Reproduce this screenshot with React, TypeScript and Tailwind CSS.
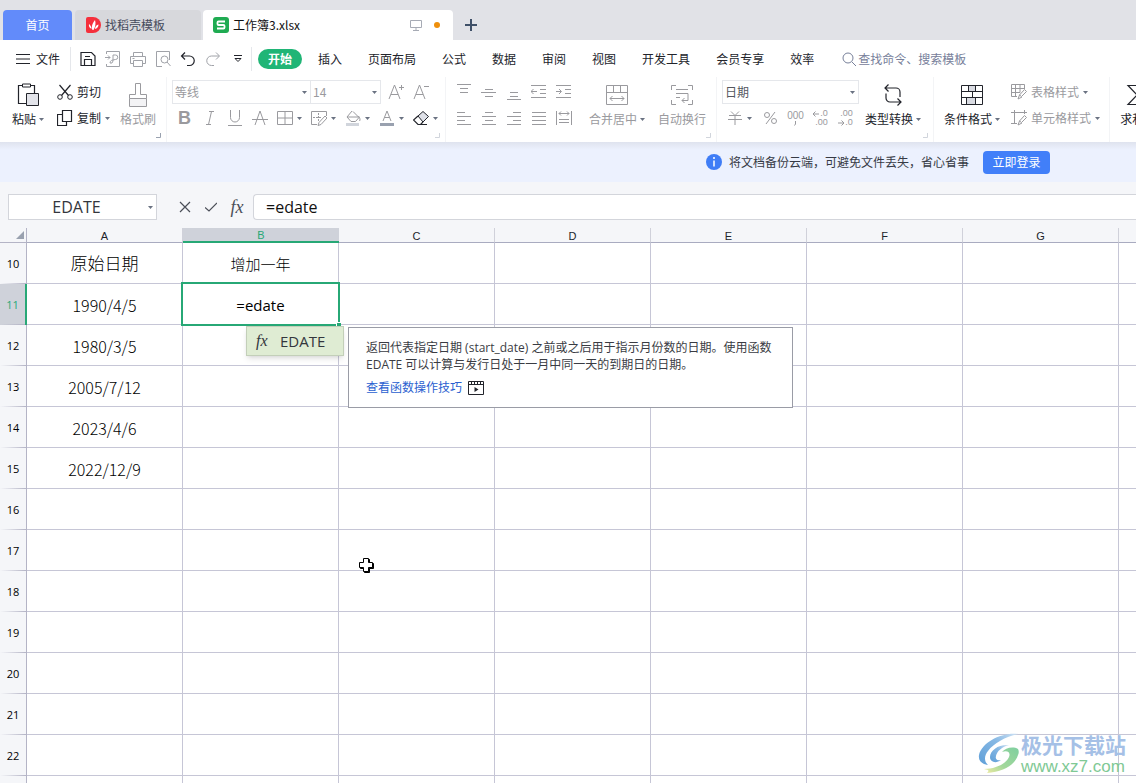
import type { ReactNode } from 'react';
import clsx from 'clsx';

type IconProps = { w?: number; h?: number; className?: string; children: ReactNode };

function Icon({ w = 16, h = 16, className, children }: IconProps) {
  return (
    <svg
      width={w}
      height={h}
      viewBox={`0 0 ${w} ${h}`}
      fill="none"
      stroke="currentColor"
      aria-hidden="true"
      className={clsx('shrink-0', className)}
    >
      {children}
    </svg>
  );
}

function Caret({ className = 'text-gray-500' }: { className?: string }) {
  return (
    <Icon w={5} h={3} className={className}>
      <path d="M0 0h5L2.5 3z" fill="currentColor" stroke="none" />
    </Icon>
  );
}

function Corner({ className = 'text-gray-400' }: { className?: string }) {
  return (
    <Icon w={5} h={5} className={clsx('absolute right-[5px] bottom-1', className)}>
      <path d="M4.5 0v4.5H0" />
    </Icon>
  );
}

function Group({ className, children }: { className?: string; children: ReactNode }) {
  return (
    <div className={clsx('relative flex h-[65px] shrink-0 items-start border-r border-gray-100 pt-[2px]', className)}>
      {children}
    </div>
  );
}

type BigButtonProps = { icon: ReactNode; label: string; caret?: boolean; muted?: boolean };

function BigButton({ icon, label, caret, muted }: BigButtonProps) {
  return (
    <button className={clsx('mt-[3px] flex shrink-0 flex-col items-center whitespace-nowrap', muted ? 'text-[#9a9a9e]' : 'text-[#22242b]')}>
      <span className="flex h-[26px] items-center">{icon}</span>
      <span className="flex h-[22px] items-center gap-[3px]">
        {label}
        {caret && <Caret />}
      </span>
    </button>
  );
}

function SmallButton({ icon, label, caret, muted }: BigButtonProps) {
  return (
    <button className={clsx('flex h-[26px] items-center gap-1 whitespace-nowrap', muted ? 'text-[#9a9a9e]' : 'text-[#22242b]')}>
      {icon}
      {label}
      {caret && <Caret />}
    </button>
  );
}

function Tool({ label, children }: { label: string; children: ReactNode }) {
  return (
    <button aria-label={label} className="flex h-[26px] w-[25px] items-center justify-center">
      {children}
    </button>
  );
}

function MenuTool({ label, children }: { label: string; children: ReactNode }) {
  return (
    <button aria-label={label} className="flex h-[26px] w-[34px] items-center justify-center gap-1">
      {children}
      <Caret />
    </button>
  );
}

type PickerProps = { label: string; value: string; className: string };

function Picker({ label, value, className }: PickerProps) {
  return (
    <label className={clsx('relative flex h-6 items-center border border-gray-200 bg-white', className)}>
      <select aria-label={label} className="h-full w-full appearance-none bg-transparent pl-[2px] outline-none">
        <option>{value}</option>
      </select>
      <Caret className="absolute right-[3px] text-gray-500" />
    </label>
  );
}

const menus = ['插入', '页面布局', '公式', '数据', '审阅', '视图', '开发工具', '会员专享', '效率'];

// each entry lists the strokes of a 16px alignment glyph
const verticalAligns = [
  { label: '顶端对齐', d: 'M1 .5h14M4 4.5h8M4 8.5h8' },
  { label: '垂直居中', d: 'M4 5.5h8M0 8.5h15M4 12.5h8' },
  { label: '底端对齐', d: 'M4 8.5h8M4 12.5h8M1 15.5h14' },
  { label: '减少缩进', d: 'M0 1.5h15M9 5.5h6M9 9.5h6M0 13.5h15M0 7.5h6M2.5 5L0 7.5 2.5 10' },
  { label: '增加缩进', d: 'M0 1.5h15M9 5.5h6M9 9.5h6M0 13.5h15M0 7.5h5M3 5l2.5 2.5L3 10' },
];

const horizontalAligns = [
  { label: '左对齐', d: 'M1 2.5h8M1 6.5h14M1 10.5h8M1 14.5h14' },
  { label: '水平居中', d: 'M4 2.5h8M1 6.5h14M4 10.5h8M1 14.5h14' },
  { label: '右对齐', d: 'M7 2.5h8M1 6.5h14M7 10.5h8M1 14.5h14' },
  { label: '两端对齐', d: 'M1 2.5h14M1 6.5h14M1 10.5h14M1 14.5h14' },
  { label: '分散对齐', d: 'M.5 1v14M15.5 1v14M3 3.5h10M5 1.5l-2 2 2 2M11 1.5l2 2-2 2M3 9.5h10M3 12.5h10' },
];

const columns = ['A', 'B', 'C', 'D', 'E', 'F', 'G', 'H'];
const rows = [10, 11, 12, 13, 14, 15, 16, 17, 18, 19, 20, 21, 22, 23];

const cells: Record<string, string> = {
  A10: '原始日期',
  B10: '增加一年',
  A11: '1990/4/5',
  A12: '1980/3/5',
  A13: '2005/7/12',
  A14: '2023/4/6',
  A15: '2022/12/9',
};

function TabBar() {
  return (
    <div className="flex h-10 shrink-0 items-end bg-[#e1e2e7] pl-[3px]">
      <button className="h-[30px] w-[69px] rounded-t bg-[#628bfa] text-white">首页</button>
      <button className="ml-[3px] flex h-[30px] w-[126px] items-center gap-1 rounded-t bg-[#d7d8dc] pl-[11px] text-[#464b5c]">
        <Icon w={15} h={16}>
          <path d="M0 2a2 2 0 0 1 2-2h5a8 8 0 0 1 0 16H2a2 2 0 0 1-2-2z" fill="#f5303c" stroke="none" />
          <path d="M6.500 13C5 10 6.500 6 9 3c1 3 .5 7-1.500 10zM5.500 12C3.500 11 2.500 9 3 7c1.500 1 2.500 3 2.500 5zM9 12c0-2.500 1.500-4 3.500-4.500 0 2.500-1.500 4-3.500 4.500z" fill="#fff" stroke="none" />
        </Icon>
        找稻壳模板
      </button>
      <div className="ml-[2px] flex h-[30px] w-[250px] items-center rounded-t bg-white pr-[13px] pl-[10px] text-[#111]">
        <Icon className="mr-1">
          <rect width="16" height="16" rx="3" fill="#1fab52" stroke="none" />
          <path d="M12 4.500H5.500a1 1 0 0 0-1 1V7a1 1 0 0 0 1 1h5a1 1 0 0 1 1 1v1.500a1 1 0 0 1-1 1H4" stroke="#fff" strokeWidth="1.800" />
        </Icon>
        工作簿3.xlsx
        <Icon w={12} h={12} className="ml-auto text-[#a7abb5]">
          <path d="M.5 1.500h11v7H.5zM6 8.500v3M3 11.500h6" />
        </Icon>
        <span className="ml-3 size-[6px] rounded-full bg-[#ee8f0c]" />
      </div>
      <button aria-label="新建" className="mb-2 ml-3 text-[#3f5068]">
        <Icon w={12} h={14}>
          <path d="M6 1v12M0 7h12" strokeWidth="2" />
        </Icon>
      </button>
    </div>
  );
}

function MenuBar() {
  return (
    <div className="flex h-[37px] shrink-0 items-center bg-white pl-4 whitespace-nowrap text-[#22242b]">
      <button className="flex items-center gap-[6px]">
        <Icon w={14} h={10}>
          <path d="M0 .5h14M0 5h14M0 9.500h14" />
        </Icon>
        文件
      </button>
      <div className="ml-[10px] h-6 w-px bg-gray-200" />
      <div className="ml-[9px] flex items-center gap-[9px] text-[#a0a2a8]">
        <button aria-label="保存" className="text-[#22242b]">
          <Icon>
            <path d="M1 14.500V1.500h10.500l3.500 3.500v9.500zM4.500 14.500v-6h7v6M5 5.500h5" strokeWidth="1.200" />
          </Icon>
        </button>
        <button aria-label="输出为PDF">
          <Icon>
            <path d="M1.500 3V.5h13v15h-13V13M0 6.500h5M3 4.500l2 2-2 2M8 10V4h2.500a2 2 0 0 1 0 4.500C7 9 5 9.500 5 12h2l1-2" />
          </Icon>
        </button>
        <button aria-label="打印">
          <Icon>
            <path d="M3.500 5V1.500h9V5M3.500 12.500h-3V5.500h15v7h-3M3.500 9.500h9v6h-9zM2.500 7.500h2" />
          </Icon>
        </button>
        <button aria-label="打印预览">
          <Icon>
            <path d="M7 15.500H1.500V.5h13V9" />
            <circle cx="9.500" cy="8.500" r="3.500" />
            <path d="M12 11l3.500 4" />
          </Icon>
        </button>
        <button aria-label="撤销" className="text-[#22242b]">
          <Icon>
            <path d="M5 1.500L1.500 5 5 8.500M2 5h7.500a4.500 4.500 0 0 1 0 9.500H7" strokeWidth="1.200" />
          </Icon>
        </button>
        <button aria-label="恢复">
          <Icon>
            <path d="M11 1.500L14.500 5 11 8.500M14 5H6.500a4.500 4.500 0 0 0 0 9.500H9" />
          </Icon>
        </button>
        <button aria-label="更多" className="ml-1 text-[#22242b]">
          <Icon w={8} h={8}>
            <path d="M0 .5h8M1 3.500h6L4 6.500z" />
          </Icon>
        </button>
      </div>
      <div className="ml-[9px] h-6 w-px bg-gray-200" />
      <button className="ml-[6px] h-5 w-11 rounded-full bg-[#20b576] font-bold text-white">开始</button>
      <nav className="ml-4 flex gap-[26px]">
        {menus.map((menu) => (
          <button key={menu}>{menu}</button>
        ))}
      </nav>
      <label className="ml-7 flex items-center gap-[2px] text-[#77809a]">
        <Icon w={14} h={14}>
          <circle cx="6" cy="6" r="5" />
          <path d="M10 10l4 4" />
        </Icon>
        <input
          aria-label="搜索"
          placeholder="查找命令、搜索模板"
          className="w-32 bg-transparent outline-none placeholder:text-[#77809a]"
        />
      </label>
    </div>
  );
}

function Ribbon() {
  return (
    <div className="relative z-10 flex h-[65px] shrink-0 overflow-hidden bg-white text-[#9a9a9e]">
      <Group className="pr-[10px] pl-3">
        <BigButton
          label="粘贴"
          caret
          icon={
            <Icon w={22} h={24}>
              <path d="M5 2.500H1.500v18H9M14 2.500h3.500V10" strokeWidth="1.200" />
              <path d="M5.500 1h8v3h-8z" />
              <path d="M9.500 10.500h12v12h-12z" fill="#e3e4ea" />
            </Icon>
          }
        />
        <div className="ml-[13px]">
          <SmallButton
            label="剪切"
            icon={
              <Icon>
                <path d="M2.500 1l9 10.500M13.500 1l-9 10.500" strokeWidth="1.200" />
                <circle cx="3" cy="13" r="2.300" />
                <circle cx="13" cy="13" r="2.300" />
              </Icon>
            }
          />
          <SmallButton
            label="复制"
            caret
            icon={
              <Icon>
                <path d="M5.500 .5h9v11h-9zM5.500 4.500h-5v11h9v-4" strokeWidth="1.200" />
              </Icon>
            }
          />
        </div>
        <div className="ml-[10px]">
          <BigButton
            label="格式刷"
            muted
            icon={
              <Icon w={20} h={24}>
                <path d="M1.500 15.500h17v8h-17z" fill="#f3f3f5" />
                <path d="M1.500 15.500v-4h6v-11h5v11h6v4" />
              </Icon>
            }
          />
        </div>
        <Corner />
      </Group>

      <Group className="pr-[3px] pl-[5px]">
        <div>
          <div className="flex h-[26px] items-center">
            <Picker label="字体" value="等线" className="w-[139px]" />
            <Picker label="字号" value="14" className="w-[70px] border-l-0" />
            <div className="ml-[2px] flex">
              <Tool label="增大字号">
                <Icon>
                  <path d="M1 15L6.500 1 12 15M3 10.500h7M11 3.500h5M13.500 1v5" />
                </Icon>
              </Tool>
              <Tool label="减小字号">
                <Icon>
                  <path d="M1 15L6.500 1 12 15M3 10.500h7M11 2.500h5" />
                </Icon>
              </Tool>
            </div>
          </div>
          <div className="flex">
            <Tool label="加粗">
              <span className="font-['Liberation_Sans'] text-lg leading-none font-bold">B</span>
            </Tool>
            <Tool label="倾斜">
              <Icon>
                <path d="M7 1.500h5M4 14.500h5M9.500 1.500l-3 13" />
              </Icon>
            </Tool>
            <Tool label="下划线">
              <Icon>
                <path d="M3.500 0v7.500a4.500 4.500 0 0 0 9 0V0M1 15.500h14" />
              </Icon>
            </Tool>
            <Tool label="删除线">
              <Icon>
                <path d="M3 15L8 1l5 14M0 9.500h16" />
              </Icon>
            </Tool>
            <MenuTool label="边框">
              <Icon>
                <path d="M.5 1.500h15v13H.5zM8 1.500v13M.5 8h15" />
              </Icon>
            </MenuTool>
            <MenuTool label="绘图边框">
              <Icon>
                <path d="M6 14.500H.5v-13h15V6" />
                <path d="M7.500 3v8M2 7.500h9" strokeDasharray="2 1" />
                <path d="M14 6l2 2-6 6.500-3 1 1-3z" />
              </Icon>
            </MenuTool>
            <MenuTool label="填充颜色">
              <Icon>
                <path d="M7 1L2 7l4 4.500h4.500L14 7.500 8 1.500M2.500 7H14" />
                <path d="M13.500 6c1.500 2 2 4 1 5" />
                <path d="M1 14.500h13" strokeWidth="3" className="text-gray-300" stroke="currentColor" />
              </Icon>
            </MenuTool>
            <MenuTool label="字体颜色">
              <Icon>
                <path d="M4 11L8 1l4 10M5.500 7.500h5" />
                <path d="M1 14.500h14" strokeWidth="3" className="text-gray-400" stroke="currentColor" />
              </Icon>
            </MenuTool>
            <MenuTool label="清除">
              <Icon className="text-[#22242b]">
                <path d="M5 6l5-4.500 5.500 5L10 12z" fill="#dfe1e8" />
                <path d="M5 6L.5 10 5 14.500h2.500L10 12M5 14.500h9" strokeWidth="1.200" />
              </Icon>
            </MenuTool>
          </div>
        </div>
        <Corner className="text-gray-300" />
      </Group>

      <Group className="pr-[10px] pl-[5px]">
        <div>
          <div className="flex">
            {verticalAligns.map((item) => (
              <Tool key={item.label} label={item.label}>
                <Icon>
                  <path d={item.d} />
                </Icon>
              </Tool>
            ))}
          </div>
          <div className="flex">
            {horizontalAligns.map((item) => (
              <Tool key={item.label} label={item.label}>
                <Icon>
                  <path d={item.d} />
                </Icon>
              </Tool>
            ))}
          </div>
        </div>
        <div className="ml-[13px] flex gap-[13px]">
          <BigButton
            label="合并居中"
            caret
            muted
            icon={
              <Icon w={22} h={20}>
                <path d="M.5 .5h21v19H.5zM.5 7.500h21M7.500 .5v7M14.500 .5v7M4 13.500h14M6.500 11L4 13.500 6.500 16M15.500 11l2.500 2.500-2.500 2.500" />
              </Icon>
            }
          />
          <BigButton
            label="自动换行"
            muted
            icon={
              <Icon w={22} h={20}>
                <path d="M5 .5H.5V5M17 .5h4.500V5M.5 15v4.500H5M21.500 15v4.500H17M5 4.500h12M5 8.500h12M5 12.500h4M17 8.500v7H11M13.500 13L11 15.500l2.500 2.500" />
              </Icon>
            }
          />
        </div>
        <Corner className="text-gray-300" />
      </Group>

      <Group className="pr-3 pl-[5px]">
        <div>
          <div className="flex h-[26px] items-center">
            <Picker label="数字格式" value="日期" className="w-[137px] text-[#55575e]" />
          </div>
          <div className="flex">
            <button aria-label="货币" className="flex h-[26px] w-9 items-center justify-center gap-[5px]">
              <Icon w={14} h={14}>
                <path d="M3 .5l4 4 4-4M1 4.500h12M0 8.500h14M7 4.500V14" />
              </Icon>
              <Caret />
            </button>
            <Tool label="百分比">
              <Icon w={13} h={14}>
                <circle cx="3" cy="4" r="2.500" />
                <circle cx="10" cy="10" r="2.500" />
                <path d="M11 1L2 13" />
              </Icon>
            </Tool>
            <Tool label="千位分隔">
              <span className="flex flex-col items-center gap-px font-['Liberation_Sans'] text-[10px] leading-[9px]">
                000
                <Icon w={3} h={5}>
                  <path d="M1.500 0v3l-1 1.500" />
                </Icon>
              </span>
            </Tool>
            <Tool label="减少小数位">
              <span className="flex flex-col items-end font-['Liberation_Sans'] text-[9px] leading-[9px]">
                <span className="flex items-center">
                  <Icon w={7} h={6}>
                    <path d="M0 3h6M2.500 .5L0 3l2.500 2.500" />
                  </Icon>
                  .0
                </span>
                <span>.00</span>
              </span>
            </Tool>
            <Tool label="增加小数位">
              <span className="flex flex-col items-end font-['Liberation_Sans'] text-[9px] leading-[9px]">
                <span>.00</span>
                <span className="flex items-center">
                  <Icon w={7} h={6}>
                    <path d="M0 3h6M3.500 .5L6 3 3.500 5.500" />
                  </Icon>
                  .0
                </span>
              </span>
            </Tool>
          </div>
        </div>
        <div className="ml-[6px]">
          <BigButton
            label="类型转换"
            caret
            icon={
              <Icon w={20} h={22}>
                <path d="M2 4h11a4 4 0 0 1 4 4v5M5.500 .5L2 4l3.500 3.500M18 18H7a4 4 0 0 1-4-4V9.500M14.500 14.500L18 18l-3.500 3.500" strokeWidth="1.200" />
              </Icon>
            }
          />
        </div>
        <Corner className="text-gray-300" />
      </Group>

      <Group className="pr-[9px] pl-[10px]">
        <BigButton
          label="条件格式"
          caret
          icon={
            <Icon w={22} h={20}>
              <path d="M7.500 .5h7v6h-7zM5.500 12.500h9v7h-9z" fill="#d9dbe2" stroke="none" />
              <path d="M.5 .5h21v19H.5zM.5 6.500h21M.5 12.500h21M7.500 .5v6M14.500 .5v6M11.500 6.500v6M5.500 12.500v7M14.500 12.500v7" />
            </Icon>
          }
        />
        <div className="ml-[11px]">
          <SmallButton
            label="表格样式"
            caret
            muted
            icon={
              <Icon>
                <path d="M6 12.500H.5v-12h13V5M.5 4.500h13M.5 8.500H9M4.500 .5v12M9 .5v8M13.500 5.500l2 2-5 5-2-1.500zM8.500 11L7 15l4-2" />
              </Icon>
            }
          />
          <SmallButton
            label="单元格样式"
            caret
            muted
            icon={
              <Icon>
                <path d="M0 2.500h16M3.500 0v13.500M0 13.500h6M13.500 0v4M13.500 5.500l2 2-5 5-2-1.500zM8.500 11L7 15l4-2" />
              </Icon>
            }
          />
        </div>
      </Group>

      <Group className="pl-[10px]">
        <BigButton
          label="求和"
          caret
          icon={
            <Icon w={20} h={22}>
              <path d="M18 5V1.500H2L11 11l-9 9.500h16V17" strokeWidth="1.200" />
            </Icon>
          }
        />
      </Group>
    </div>
  );
}

function BackupNotice() {
  return (
    <div className="flex h-10 shrink-0 items-center justify-end bg-linear-to-b from-[#dfe3ee] via-[#ecf1fe] via-20% to-[#ecf1fe] pr-[86px] text-[#363a45]">
      <Icon className="mr-[7px]">
        <circle cx="8" cy="8" r="8" fill="#3f7df6" stroke="none" />
        <path d="M8 3v2M8 6.500v6" stroke="#fff" strokeWidth="1.500" />
      </Icon>
      将文档备份云端，可避免文件丢失，省心省事
      <button className="ml-[14px] h-[23px] w-[67px] rounded bg-[#417ff9] text-white">立即登录</button>
    </div>
  );
}

function FormulaBar() {
  return (
    <div className="flex h-[46px] shrink-0 items-center bg-[#f5f6f9] pt-1 pl-2 font-['Open_Sans','Noto_Sans_CJK_SC',sans-serif]">
      <label className="relative flex h-[26px] w-[149px] items-center border border-[#d3d5db] bg-white">
        <input
          aria-label="名称框"
          defaultValue="EDATE"
          className="w-full bg-transparent pr-3 text-center text-base text-[#33363d] outline-none"
        />
        <Caret className="absolute right-[3px] text-gray-500" />
      </label>
      <button aria-label="取消" className="ml-[22px] text-[#4a4e58]">
        <Icon w={12} h={12}>
          <path d="M1 1l10 10M11 1L1 11" strokeWidth="1.200" />
        </Icon>
      </button>
      <button aria-label="输入" className="ml-[14px] text-[#4a4e58]">
        <Icon w={12} h={12}>
          <path d="M0 6.500L4 10l8-8" strokeWidth="1.200" />
        </Icon>
      </button>
      <button aria-label="插入函数" className="ml-3 w-4 font-['Liberation_Serif'] text-lg leading-none text-[#4a4e58] italic">
        fx
      </button>
      <input
        aria-label="编辑栏"
        defaultValue="=edate"
        className="ml-2 h-[26px] min-w-0 flex-1 rounded-l border border-r-0 border-[#d3d5db] bg-white pl-3 text-base text-[#111] outline-none"
      />
    </div>
  );
}

function FunctionHint() {
  return (
    <>
      <button className="absolute top-[42px] left-[63px] z-10 flex h-[30px] w-[98px] items-center border border-[#c3cfb9] bg-[#dfecd3] pl-[9px] font-['Open_Sans'] text-[15px] font-normal text-[#33363d] shadow-md">
        <span className="w-6 text-left font-['Liberation_Serif'] text-base italic">fx</span>
        EDATE
      </button>
      <div className="absolute top-[43px] left-[165px] z-10 w-[445px] border border-[#9a9ca6] bg-white px-[17px] pt-[11px] pb-[11px] text-left font-['Open_Sans','Noto_Sans_CJK_SC',sans-serif] text-xs leading-[17px] font-normal text-[#3a3c43]">
        <p>返回代表指定日期 (start_date) 之前或之后用于指示月份数的日期。使用函数 EDATE 可以计算与发行日处于一月中同一天的到期日的日期。</p>
        <a href="#tips" className="mt-[6px] flex items-center gap-[6px] text-[#2a5fd0]">
          查看函数操作技巧
          <Icon className="text-[#22242b]">
            <path d="M.5 1.500h15v13H.5zM.5 4.500h15M3.500 1.500v3M6.500 1.500v3M9.500 1.500v3M12.500 1.500v3" />
            <path d="M6.500 7v5l4-2.500z" fill="currentColor" stroke="none" />
          </Icon>
        </a>
      </div>
    </>
  );
}

function EditingCell() {
  return (
    <div className="relative flex h-10 items-center pt-[2px]">
      <input
        aria-label="B11"
        defaultValue="=edate"
        className="w-full bg-transparent text-center font-['Open_Sans'] text-[15px] font-normal outline-none"
      />
      <div className="pointer-events-none absolute -inset-[2px] border-2 border-[#27a876]" />
      <div className="absolute -right-[3px] -bottom-[3px] size-[5px] border-t border-l border-white bg-[#27a876]" />
      <FunctionHint />
    </div>
  );
}

function cellStyle(key: string) {
  if (key === 'B11') return 'p-0';
  if (key === 'A10') return 'p-0 pt-px text-[17px]';
  if (key === 'B10') return 'p-0 pt-px text-[15px]';
  return 'p-0 pt-[2px] text-base';
}

function Sheet() {
  return (
    <main className="relative min-h-0 flex-1 overflow-hidden bg-white">
      <table className="w-[1275px] table-fixed border-separate border-spacing-0 text-center text-[#22242b]">
        <colgroup>
          <col className="w-[27px]" />
          {columns.map((column) => (
            <col key={column} className="w-[156px]" />
          ))}
        </colgroup>
        <thead className="bg-[#f5f6f9] font-['Liberation_Sans'] text-[11px] leading-none">
          <tr className="h-[15px]">
            <th className="border-r border-b border-[#b4b4c6] p-0">
              <Icon w={8} h={8} className="ml-4 text-gray-400">
                <path d="M8 0v8H0z" fill="currentColor" stroke="none" />
              </Icon>
            </th>
            {columns.map((column) => (
              <th
                key={column}
                className={clsx(
                  'h-[15px] p-0 pt-[2px] font-normal',
                  column === 'B'
                    ? 'border-b-2 border-[#27a876] bg-[#cfd2da] text-[#27a876]'
                    : 'border-r border-b border-r-[#d0d1da] border-b-[#a9abc0]',
                )}
              >
                {column}
              </th>
            ))}
          </tr>
        </thead>
        <tbody className="font-light text-black">
          {rows.map((row) => (
            <tr key={row} className="h-[41px]">
              <th
                className={clsx(
                  "relative h-[41px] border-r p-0 pt-[2px] font-['Open_Sans'] text-[11px] font-normal",
                  row === 11 ? 'border-r-2 border-[#27a876] bg-[#cfd2da] text-[#27a876]' : 'border-[#b4b4c6] bg-[#f5f6f9]',
                )}
              >
                {row}
                <span className="absolute inset-x-0 bottom-0 h-px bg-linear-to-r from-transparent to-[#b4b4c6]" />
              </th>
              {columns.map((column) => {
                const key = `${column}${row}`;
                return (
                  <td key={key} className={clsx('h-[41px] border-r border-b border-[#c6c6d6]', cellStyle(key))}>
                    {key === 'B11' ? <EditingCell /> : cells[key]}
                  </td>
                );
              })}
            </tr>
          ))}
        </tbody>
      </table>

      {/* sheet cursor */}
      <Icon w={15} h={15} className="absolute top-[330px] left-[359px]">
        <path d="M5.500 1.500h5v4h4v5h-4v4h-5v-4h-4v-5h4z" fill="#000" stroke="#000" />
        <path d="M4.500 .5h5v4h4v5h-4v4h-5v-4h-4v-5h4z" fill="#fff" stroke="#000" />
      </Icon>

      <div className="pointer-events-none absolute right-[10px] bottom-[7px] flex items-center gap-[2px]">
        <svg width="41" height="40" viewBox="0 0 41 40" aria-hidden="true">
          <defs>
            <linearGradient id="swirl-blue" x1="0" y1="1" x2="1" y2="0">
              <stop offset="0" stopColor="#5f9fd8" />
              <stop offset="0.6" stopColor="#86b8e4" />
              <stop offset="1" stopColor="#cfe2f4" />
            </linearGradient>
            <linearGradient id="swirl-green" x1="0" y1="1" x2="1" y2="0">
              <stop offset="0" stopColor="#f3eca4" />
              <stop offset="0.4" stopColor="#a3d89a" />
              <stop offset="1" stopColor="#7fcfa0" />
            </linearGradient>
          </defs>
          <path d="M40 1C24-1 4 9 1 22c-1 6 3 9 9 10-4-4-4-9 0-14C16 10 27 4 40 1z" fill="url(#swirl-blue)" />
          <path d="M31 12c-10-1-19 5-19 12 0 5 6 7 11 3-4 1-6-1-5-4 1-5 6-9 13-11z" fill="url(#swirl-blue)" />
          <path d="M40 16c-5-3-13-1-16 3 5-2 9 0 7 5-3 7-14 12-25 12 4 1 6 1 3 4 16-1 28-8 31-18 1-2 1-4 0-6z" fill="url(#swirl-green)" />
        </svg>
        <div>
          <p className="text-[21px] leading-[28px] font-bold text-[#a5c0e6]">极光下载站</p>
          <p className="font-['Liberation_Sans'] text-[17px] leading-[18px] text-[#7fc995]">www.xz7.com</p>
        </div>
      </div>
    </main>
  );
}

export default function App() {
  return (
    <div className="flex h-screen flex-col overflow-hidden bg-white font-['Noto_Sans_CJK_SC',sans-serif] text-xs">
      <TabBar />
      <MenuBar />
      <Ribbon />
      <BackupNotice />
      <FormulaBar />
      <Sheet />
    </div>
  );
}
